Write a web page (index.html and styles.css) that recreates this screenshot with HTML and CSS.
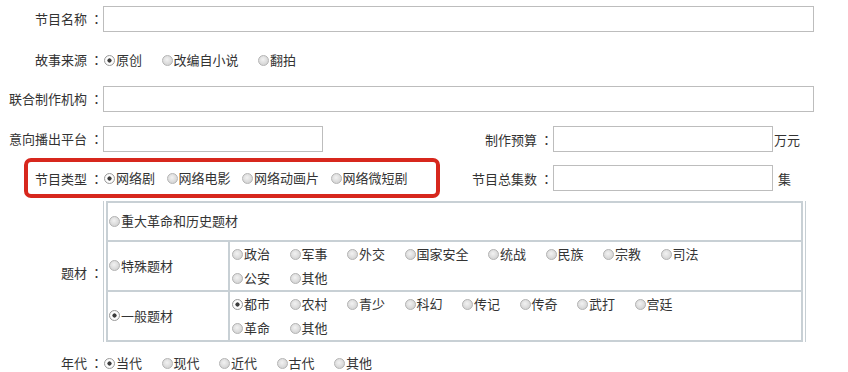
FILE: index.html
```html
<!DOCTYPE html>
<html lang="zh-CN">
<head>
<meta charset="utf-8">
<title>节目信息</title>
<link rel="stylesheet" href="styles.css">
</head>
<body>
<form class="form">
  <div class="row r1">
    <span class="lbl">节目名称<span class="colon">：</span></span>
    <input class="txt wide" type="text">
  </div>

  <div class="row r2">
    <span class="lbl">故事来源<span class="colon">：</span></span>
    <div class="opts">
      <label class="opt"><input type="radio" name="src" checked>原创</label>
      <label class="opt"><input type="radio" name="src">改编自小说</label>
      <label class="opt"><input type="radio" name="src">翻拍</label>
    </div>
  </div>

  <div class="row r3">
    <span class="lbl">联合制作机构<span class="colon">：</span></span>
    <input class="txt wide" type="text">
  </div>

  <div class="split r4">
    <div class="cell">
      <span class="lbl">意向播出平台<span class="colon">：</span></span>
      <input class="txt short" type="text">
    </div>
    <div class="cell">
      <span class="rlbl">制作预算<span class="colon">：</span></span>
      <input class="txt short" type="text">
      <span class="unit">万元</span>
    </div>
  </div>

  <div class="split r5">
    <div class="hl">
      <span class="hl-lbl">节目类型<span class="colon">：</span></span>
      <div class="opts tight">
        <label class="opt"><input type="radio" name="type" checked>网络剧</label>
        <label class="opt"><input type="radio" name="type">网络电影</label>
        <label class="opt"><input type="radio" name="type">网络动画片</label>
        <label class="opt"><input type="radio" name="type">网络微短剧</label>
      </div>
    </div>
    <div class="cell">
      <span class="rlbl">节目总集数<span class="colon">：</span></span>
      <input class="txt short" type="text">
      <span class="unit gap">集</span>
    </div>
  </div>

  <div class="subj">
    <span class="lbl">题材<span class="colon">：</span></span>
    <div class="tblwrap">
      <table class="tbl">
        <tr class="t1">
          <td colspan="2"><label class="opt"><input type="radio" name="subj">重大革命和历史题材</label></td>
        </tr>
        <tr class="t2">
          <td class="c1"><label class="opt"><input type="radio" name="subj">特殊题材</label></td>
          <td class="c2">
            <div class="line">
              <label class="opt"><input type="radio" name="sp">政治</label>
              <label class="opt"><input type="radio" name="sp">军事</label>
              <label class="opt"><input type="radio" name="sp">外交</label>
              <label class="opt"><input type="radio" name="sp">国家安全</label>
              <label class="opt"><input type="radio" name="sp">统战</label>
              <label class="opt"><input type="radio" name="sp">民族</label>
              <label class="opt"><input type="radio" name="sp">宗教</label>
              <label class="opt"><input type="radio" name="sp">司法</label>
            </div>
            <div class="line">
              <label class="opt"><input type="radio" name="sp">公安</label>
              <label class="opt"><input type="radio" name="sp">其他</label>
            </div>
          </td>
        </tr>
        <tr class="t3">
          <td class="c1"><label class="opt"><input type="radio" name="subj" checked>一般题材</label></td>
          <td class="c2">
            <div class="line">
              <label class="opt"><input type="radio" name="gen" checked>都市</label>
              <label class="opt"><input type="radio" name="gen">农村</label>
              <label class="opt"><input type="radio" name="gen">青少</label>
              <label class="opt"><input type="radio" name="gen">科幻</label>
              <label class="opt"><input type="radio" name="gen">传记</label>
              <label class="opt"><input type="radio" name="gen">传奇</label>
              <label class="opt"><input type="radio" name="gen">武打</label>
              <label class="opt"><input type="radio" name="gen">宫廷</label>
            </div>
            <div class="line">
              <label class="opt"><input type="radio" name="gen">革命</label>
              <label class="opt"><input type="radio" name="gen">其他</label>
            </div>
          </td>
        </tr>
      </table>
    </div>
  </div>

  <div class="row r6">
    <span class="lbl">年代<span class="colon">：</span></span>
    <div class="opts">
      <label class="opt"><input type="radio" name="era" checked>当代</label>
      <label class="opt"><input type="radio" name="era">现代</label>
      <label class="opt"><input type="radio" name="era">近代</label>
      <label class="opt"><input type="radio" name="era">古代</label>
      <label class="opt"><input type="radio" name="era">其他</label>
    </div>
  </div>
</form>
</body>
</html>
```

FILE: styles.css
```css
html, body {
  margin: 0;
  padding: 0;
  background: #ffffff;
}

body {
  font-family: "Noto Sans CJK SC", "Microsoft YaHei", "Noto Sans", sans-serif;
  font-size: 13px;
  color: #333333;
  width: 848px;
  height: 372px;
  overflow: hidden;
}

.form {
  margin: 0;
}

.row {
  display: flex;
  align-items: center;
  box-sizing: border-box;
}

.r1 { height: 38px; }
.r2 { height: 44px; }
.r3 { height: 34px; }
.r6 { height: 42px; }

.lbl {
  width: 100px;
  flex: none;
  text-align: right;
  white-space: nowrap;
  line-height: 18px;
}

.colon {
  display: inline-block;
  width: 13px;
  text-align: center;
  font-family: "Noto Sans CJK TC", "Noto Sans CJK SC", sans-serif;
  padding-left: 3px;
  box-sizing: border-box;
}

.txt {
  box-sizing: border-box;
  height: 26px;
  margin: 0 0 0 3px;
  padding: 0 4px;
  border: 1px solid #bdbdbd;
  background: #ffffff;
  font: inherit;
  outline: none;
}

.wide { width: 711px; }
.short { width: 220px; }

.opts {
  display: flex;
  align-items: center;
  margin-left: 4px;
}

.opt {
  display: inline-flex;
  align-items: center;
  margin-right: 19.5px;
  white-space: nowrap;
  line-height: 18px;
}

.tight .opt { margin-right: 11.5px; }

.opt input {
  -webkit-appearance: none;
  appearance: none;
  box-sizing: border-box;
  width: 11px;
  height: 11px;
  margin: 0 1px 0 0;
  border-radius: 50%;
  border: 1px solid #b4b4b4;
  background: radial-gradient(circle at 45% 40%, #f2f2f2 0%, #d6d6d6 70%, #c8c8c8 100%);
  flex: none;
}

.opt input:checked {
  border-color: #9a9a9a;
  background: radial-gradient(circle, #3c3c3c 0, #3c3c3c 1.8px, #ffffff 2.4px, #f4f4f4 100%);
}

/* two-column rows */
.split {
  display: grid;
  grid-template-columns: 440px 1fr;
  box-sizing: border-box;
}

.r4 {
  height: 42px;
  padding-top: 4px;
}

.r5 {
  height: 40px;
}

.cell {
  display: flex;
  align-items: center;
}

.rlbl {
  width: 110px;
  flex: none;
  text-align: right;
  white-space: nowrap;
}

.unit {
  margin-left: 1px;
  white-space: nowrap;
}

.unit.gap { margin-left: 5px; }

.hl {
  display: flex;
  align-items: center;
  box-sizing: border-box;
  height: 40px;
  margin-left: 24px;
  border: 4px solid #d7271d;
  border-radius: 7px;
}

.hl-lbl {
  width: 72px;
  flex: none;
  text-align: right;
  white-space: nowrap;
}

/* subject table */
.subj {
  display: flex;
  align-items: center;
  margin-top: 3px;
}

.subj .lbl {
  padding-top: 2px;
}

.tblwrap {
  box-sizing: border-box;
  width: 703px;
  margin-left: 3px;
  padding: 0 2px;
  border-left: 1px solid #c6ced3;
  border-right: 1px solid #c6ced3;
}

.tbl {
  width: 100%;
  border-collapse: collapse;
}

.tbl td {
  border: 2px solid #c8d0d5;
  padding: 0 1px;
  vertical-align: middle;
  line-height: 24px;
}

.tbl .c1 {
  width: 118px;
}

.tbl .c2 {
  padding: 0 1px 0 2px;
}

.t1 td { height: 37px; }

.line {
  display: flex;
  align-items: center;
  height: 24px;
}
```
